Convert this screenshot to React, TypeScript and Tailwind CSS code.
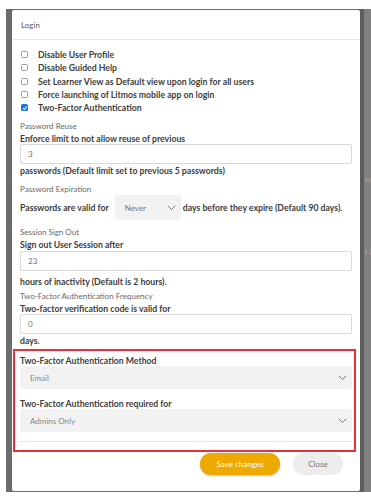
import React from 'react';

const font = { fontFamily: 'Lato, "Open Sans", sans-serif' };

const Chevron: React.FC = () => (
    <svg width="9" height="6" viewBox="0 0 9 6" fill="none">
        <polyline points="1,1 4.5,4.5 8,1" stroke="#7a7a7a" strokeWidth="1" strokeLinecap="round" strokeLinejoin="round" />
    </svg>
);

const CheckRow: React.FC<{ label: string; checked?: boolean }> = ({ label, checked }) => (
    <div className="flex items-center h-[13.3px]">
        {checked ? (
            <span className="w-[7px] h-[7px] rounded-[1.5px] bg-[#1b74e4] flex items-center justify-center ml-[1px]">
                <svg width="6" height="6" viewBox="0 0 6 6" fill="none">
                    <polyline points="1,3.2 2.4,4.5 5,1.5" stroke="#fff" strokeWidth="1.1" />
                </svg>
            </span>
        ) : (
            <span className="w-[7px] h-[7px] rounded-[1.5px] border border-[#9a9a9a] bg-white ml-[1px]"></span>
        )}
        <span className="ml-[10px] text-[8.7px] font-bold text-[#3d3d3d]">{label}</span>
    </div>
);

const Caption: React.FC<{ children: React.ReactNode }> = ({ children }) => (
    <div className="h-[12px] flex items-center text-[8px] text-[#6a6a6a]">{children}</div>
);

const Bold: React.FC<{ children: React.ReactNode }> = ({ children }) => (
    <div className="h-[12px] flex items-center text-[8.7px] font-bold text-[#3d3d3d]">{children}</div>
);

const Input: React.FC<{ value: string }> = ({ value }) => (
    <div className="h-[20px] border border-[#d9d9d9] rounded-[2px] flex items-center px-[7px] text-[8px] text-[#777]">
        {value}
    </div>
);

const Select: React.FC<{ value: string }> = ({ value }) => (
    <div className="h-[23px] bg-[#f2f2f2] rounded-[2px] flex items-center justify-between pl-[10px] pr-[5px] text-[8px] text-[#888]">
        <span>{value}</span>
        <Chevron />
    </div>
);

const App: React.FC = () => {
    return (
        <div className="w-[371px] h-[500px] bg-white overflow-hidden" style={font}>
            <div className="mt-[9px] ml-[6px] w-[365px] h-[483px] bg-[#6c6c6c] flex">
                <div className="shrink-0 mt-[1px] ml-[6px] w-[348px] h-[481px] bg-white rounded-[2px] flex flex-col">
                    <div className="h-[30px] flex items-center pl-[9px] border-b border-[#e8e8e8] text-[8px] text-[#5a5a5a]">
                        Login
                    </div>
                    <div className="px-[8px] pt-[8px] flex flex-col">
                        <div className="flex flex-col">
                            <CheckRow label="Disable User Profile" />
                            <CheckRow label="Disable Guided Help" />
                            <CheckRow label="Set Learner View as Default view upon login for all users" />
                            <CheckRow label="Force launching of Litmos mobile app on login" />
                            <CheckRow label="Two-Factor Authentication" checked />
                        </div>

                        <div className="mt-[6px]">
                            <Caption>Password Reuse</Caption>
                        </div>
                        <Bold>Enforce limit to not allow reuse of previous</Bold>
                        <Input value="3" />
                        <Bold>passwords (Default limit set to previous 5 passwords)</Bold>

                        <div className="mt-[7px]">
                            <Caption>Password Expiration</Caption>
                        </div>
                        <div className="flex items-center h-[25px] text-[8.7px] font-bold text-[#3d3d3d]">
                            <span>Passwords are valid for</span>
                            <div className="ml-[6px] w-[66px] h-[25px] bg-[#f2f2f2] rounded-[2px] flex items-center justify-between pl-[10px] pr-[5px] font-normal text-[8px] text-[#777]">
                                <span>Never</span>
                                <Chevron />
                            </div>
                            <span className="ml-[2px]">days before they expire (Default 90 days).</span>
                        </div>

                        <div className="mt-[6px]">
                            <Caption>Session Sign Out</Caption>
                        </div>
                        <Bold>Sign out User Session after</Bold>
                        <div className="mt-[1px]">
                            <Input value="23" />
                        </div>
                        <div className="mt-[4px]">
                            <Bold>hours of inactivity (Default is 2 hours).</Bold>
                        </div>

                        <div className="mt-[3px]">
                            <Caption>Two-Factor Authentication Frequency</Caption>
                        </div>
                        <Bold>Two-factor verification code is valid for</Bold>
                        <Input value="0" />
                        <Bold>days.</Bold>

                        <div className="mt-[3px] ml-[-7px] mr-[-4px] border-2 border-[#e8303a] pl-[5px] pr-[2px] pt-[3px] pb-[7.5px]">
                            <Bold>Two-Factor Authentication Method</Bold>
                            <Select value="Email" />
                            <div className="mt-[8px]">
                                <Bold>Two-Factor Authentication required for</Bold>
                            </div>
                            <Select value="Admins Only" />
                            <div className="mt-[9px] border-t border-[#e6e6e6]"></div>
                        </div>

                        <div className="flex justify-end mt-[1px] pr-[9px]">
                            <button className="w-[80px] h-[22px] rounded-full bg-[#eeaa00] text-white text-[8px] shadow-[0_1px_2px_rgba(0,0,0,0.25)]">
                                Save changes
                            </button>
                            <button className="ml-[13px] w-[50px] h-[22px] rounded-full bg-[#ececec] text-[#777] text-[8px]">
                                Close
                            </button>
                        </div>
                    </div>
                </div>
                <div className="flex-1 min-w-0 flex">
                    <div className="w-[4px] shrink-0 bg-[#5e5e5e]"></div>
                    <div className="flex-1 min-w-0 bg-[#808080] overflow-hidden flex flex-col text-[7px] text-[#a8a8a8] pl-[1px]">
                        <span className="mt-[165px] whitespace-nowrap">ou</span>
                        <span className="mt-[62px] whitespace-nowrap">f i</span>
                    </div>
                </div>
            </div>
        </div>
    );
};

export default App;
